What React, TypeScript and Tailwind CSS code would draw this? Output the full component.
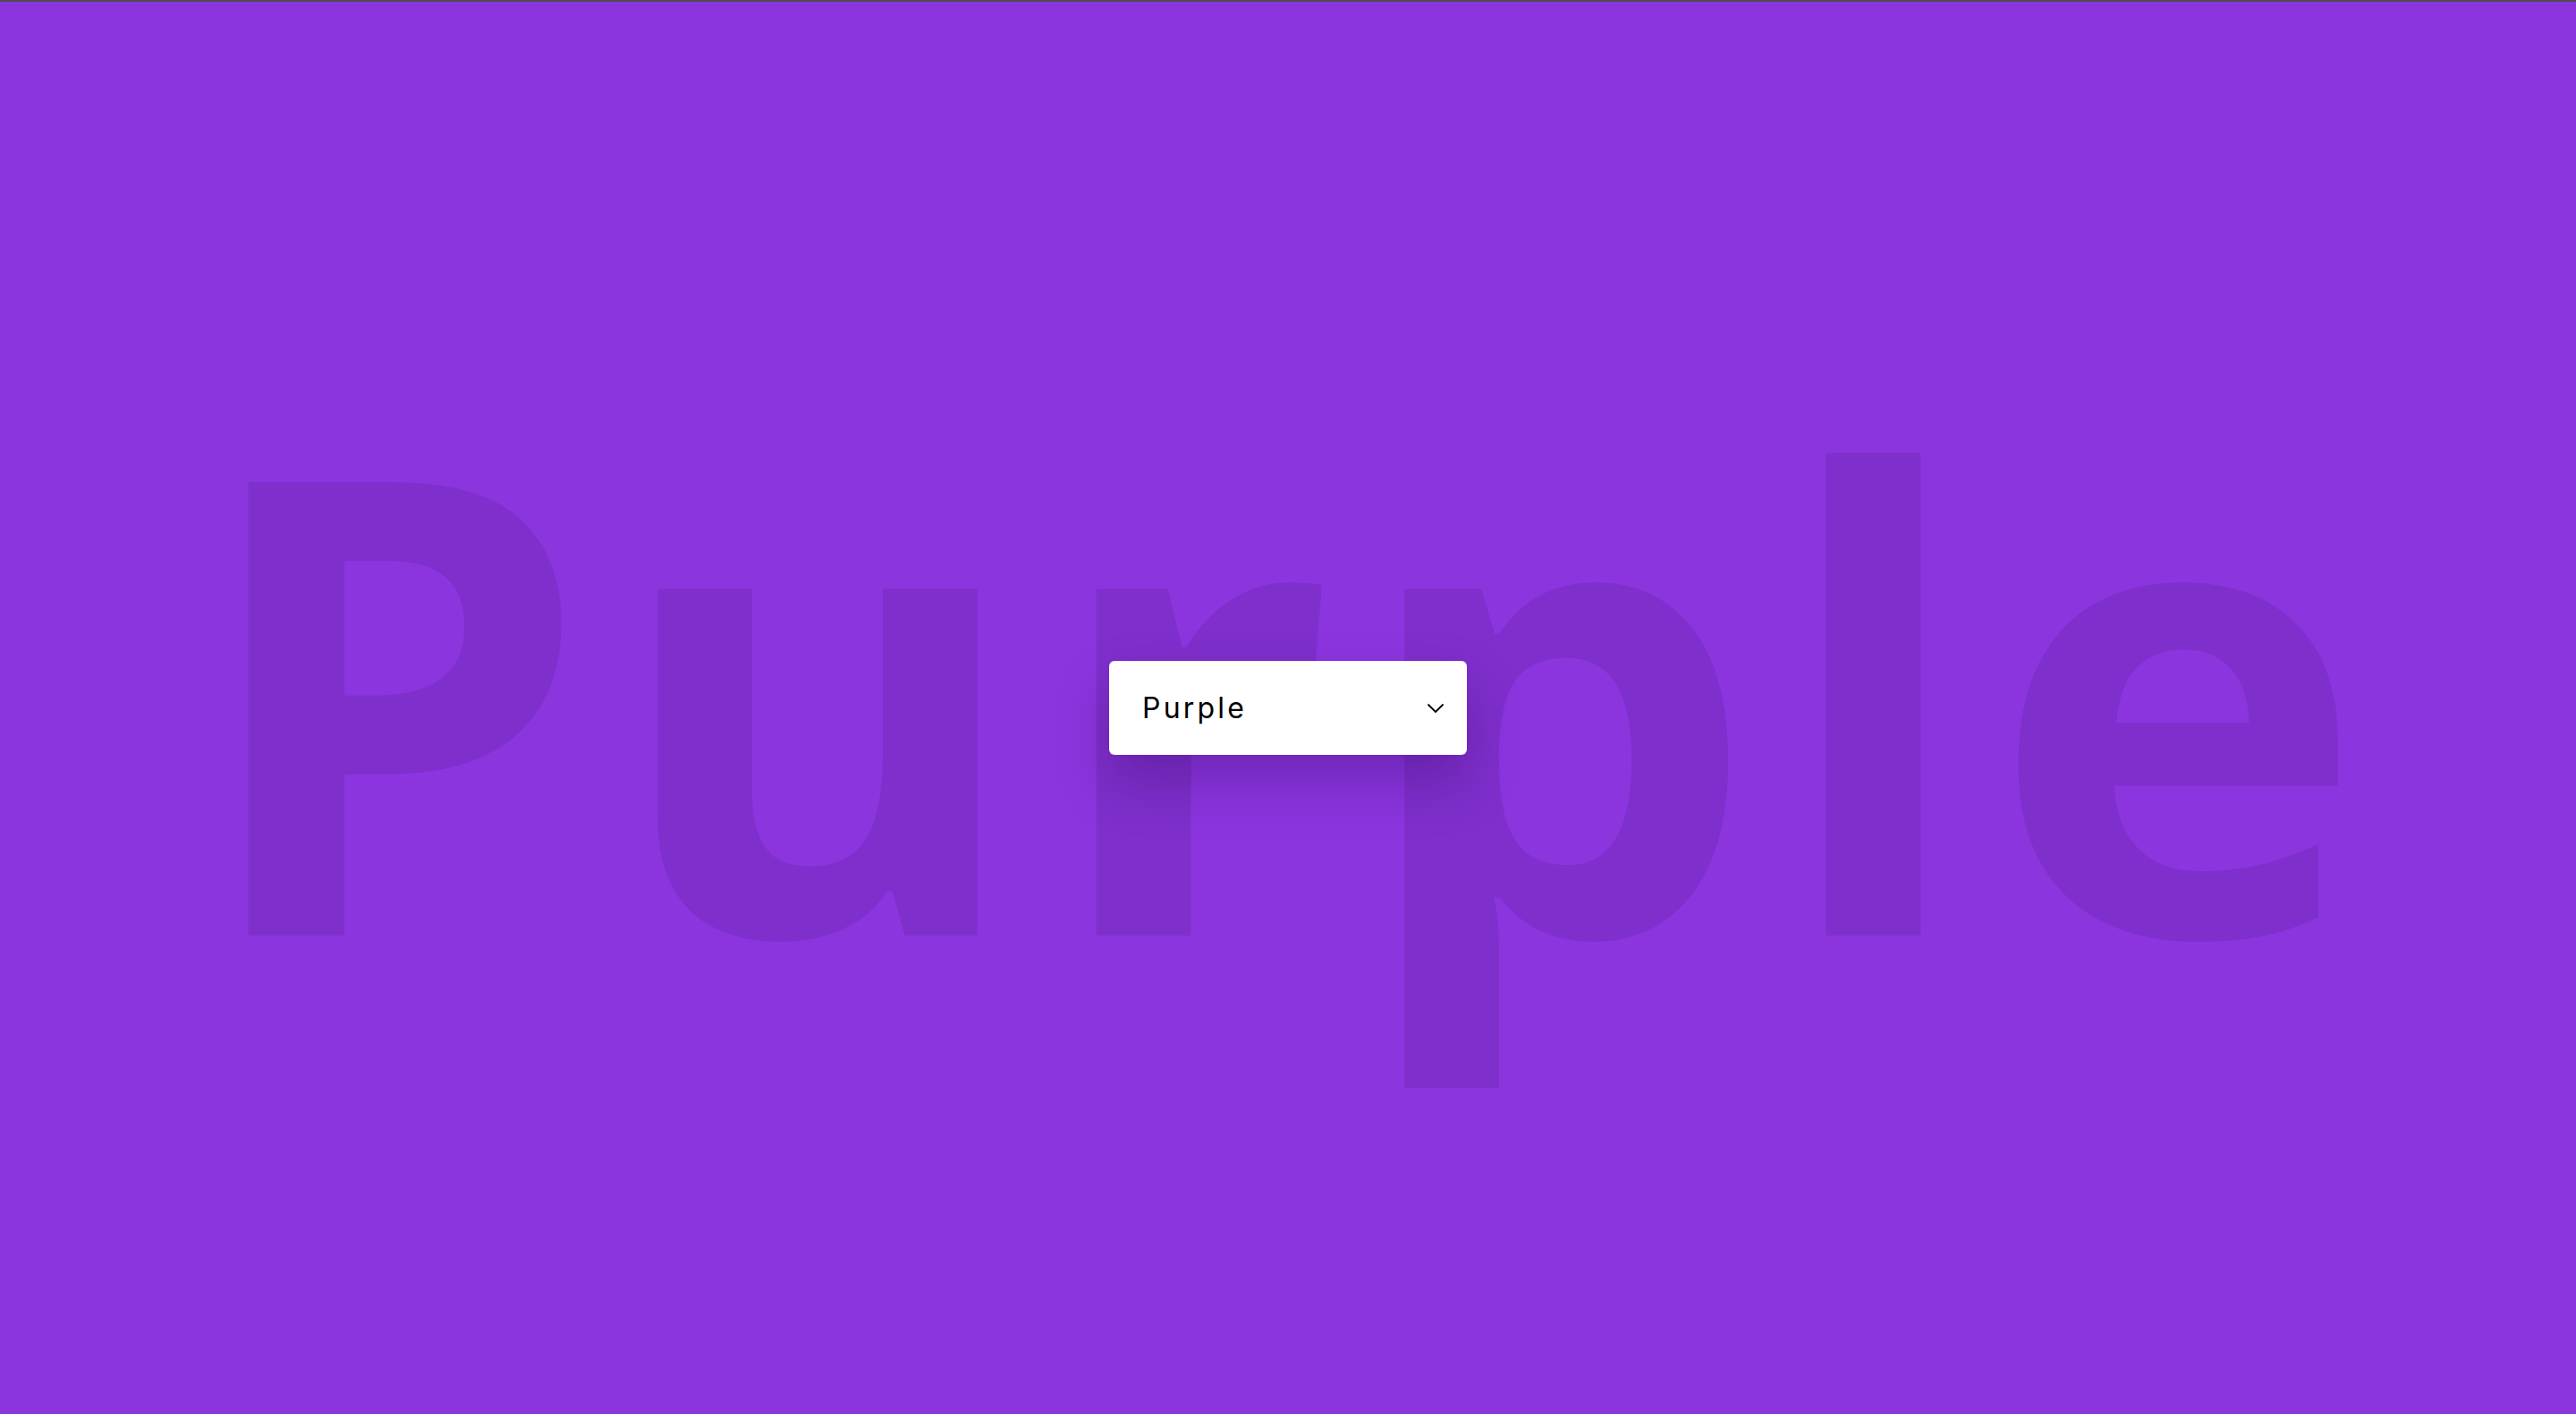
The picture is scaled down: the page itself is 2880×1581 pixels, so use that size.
import React from 'react';

function Chevron() {
  return (
    <svg width="20" height="12" viewBox="0 0 20 12" fill="none" className="shrink-0">
      <path d="M1.5 1.5 L10 10 L18.5 1.5" stroke="#000" strokeWidth="1.8" />
    </svg>
  );
}

function ColorSelect() {
  return (
    <div className="col-start-1 row-start-1 z-10 flex h-[105px] w-[400px] items-center justify-between rounded-md bg-white pl-[37px] pr-[25px] shadow-[0_30px_60px_rgba(40,0,80,0.28)]">
      <span className="font-['Inter'] text-[32px] leading-none tracking-[0.1em] text-black">Purple</span>
      <Chevron />
    </div>
  );
}

function App() {
  return (
    <div className="grid h-[1581px] w-full place-items-center overflow-hidden border-t-2 border-[#4b4e51] bg-[#8b35df]">
      <div className="col-start-1 row-start-1 select-none pb-[42px] font-['Open_Sans'] text-[710px] font-bold leading-none tracking-[0.031em] text-[#7f2fcc]">
        Purple
      </div>
      <ColorSelect />
    </div>
  );
}

export default App;
